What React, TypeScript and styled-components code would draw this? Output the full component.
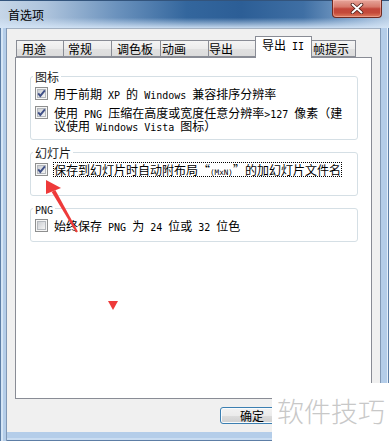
import React, { useId } from 'react';
import styled, { createGlobalStyle } from 'styled-components';

const CJK = `"Noto Sans CJK SC", "Noto Sans", sans-serif`;
const MONO = `"DejaVu Sans Mono", "Liberation Mono", monospace`;

const GlobalStyle = createGlobalStyle`
  html, body { margin: 0; padding: 0; background: #ffffff; overflow: hidden; }
  body { font-family: ${CJK}; }
  #root { width: 389px; height: 441px; }
`;

const Window = styled.div`
  position: relative;
  width: 389px;
  height: 441px;
  display: flex;
  flex-direction: column;
  overflow: hidden;
  background:
    linear-gradient(to right, #5d7ea6 0 1px, #d5e5f5 1px 3px, #b4cde9 3px 6px, #8198b5 6px 7px, transparent 7px),
    linear-gradient(to left, #5d7ea6 0 1px, #e6f0fa 1px 2px, #b4cde9 2px 8px, #8198b5 8px 9px, transparent 9px),
    linear-gradient(to top, #5d7ea6 0 1px, #c9dcf1 1px 3px, #b4cde9 3px 8px, transparent 8px),
    #b4cde9;
`;

const TitleBar = styled.div`
  height: 28px;
  flex: none;
  display: flex;
  align-items: flex-start;
  border-top: 1px solid #33547c;
  box-sizing: border-box;
  background:
    linear-gradient(to bottom, rgba(255,255,255,0) 0%, rgba(255,255,255,0) 62%, rgba(214,230,247,0.9) 100%),
    linear-gradient(to right, #c6d6e8 0%, #adc3dc 12%, #6b92bd 30%, #33669d 48%, #2c5e96 62%, #3f6fa4 78%, #86a8cd 92%, #b8cde4 100%);
`;

const Title = styled.div`
  padding: 7px 0 0 8px;
  font-size: 12px;
  line-height: 14px;
  color: #000;
`;

const CloseButton = styled.div`
  margin-left: auto;
  margin-right: 7px;
  margin-top: -1px;
  width: 50px;
  height: 18px;
  box-sizing: border-box;
  border: 1px solid #6e2a22;
  border-top: none;
  border-radius: 0 0 4px 4px;
  background:
    linear-gradient(to bottom, #e6a59b 0%, #d77a6c 40%, #c2463a 52%, #c44a3a 75%, #de7d5f 100%);
  box-shadow: inset 0 0 0 1px rgba(255, 200, 190, 0.45);
  display: flex;
  align-items: center;
  justify-content: center;
`;

const FrameBody = styled.div`
  flex: 1;
  display: flex;
  padding: 0 9px 9px 7px;
  min-height: 0;
`;

const Client = styled.div`
  flex: 1;
  display: flex;
  flex-direction: column;
  background: #f0f0f0;
  border-top: 1px solid #a3b1c2;
  padding: 7px 8px 0 8px;
`;

const TabStrip = styled.div`
  height: 21px;
  display: flex;
  align-items: flex-end;
  padding-left: 1px;
  flex: none;
`;

const Tab = styled.div<{ $w: number; $pl: number; $active?: boolean; $first?: boolean }>`
  position: relative;
  z-index: ${(p) => (p.$active ? 2 : 1)};
  box-sizing: border-box;
  width: ${(p) => p.$w}px;
  height: ${(p) => (p.$active ? 22 : 17)}px;
  margin-left: ${(p) => (p.$first ? 0 : -1)}px;
  margin-bottom: ${(p) => (p.$active ? -1 : 0)}px;
  padding-left: ${(p) => p.$pl}px;
  border: 1px solid #898c95;
  border-bottom: ${(p) => (p.$active ? 'none' : '1px solid #898c95')};
  background: ${(p) =>
    p.$active ? '#ffffff' : 'linear-gradient(to bottom, #f4f4f4 0%, #ececec 50%, #e1e1e1 51%, #dcdcdc 100%)'};
  font-size: 12px;
  line-height: 15px;
  color: #000;
  white-space: nowrap;
`;

const Panel = styled.div`
  box-sizing: border-box;
  height: 342px;
  flex: none;
  border: 1px solid #898c95;
  background: #ffffff;
  padding: 12px 13px 0 14px;
  display: flex;
  flex-direction: column;
  gap: 6px;
`;

const Group = styled.fieldset<{ $pb: number }>`
  margin: 0;
  min-width: 0;
  border: 1px solid #d5dfe5;
  border-radius: 3px;
  padding: 4px 4px ${(p) => p.$pb}px 4px;
  display: flex;
  flex-direction: column;
  gap: 6px;
`;

const Legend = styled.legend`
  padding: 0 2px;
  margin-left: -2px;
  font-size: 12px;
  line-height: 13px;
  color: #1a1a1a;
`;

const CheckRow = styled.div`
  display: flex;
  align-items: flex-start;
  gap: 6px;
`;

const Label = styled.span<{ $focused?: boolean }>`
  font-size: 12px;
  line-height: 13px;
  color: #000;
  white-space: nowrap;
  ${(p) =>
    p.$focused
      ? `border: 1px dotted #000; margin: -1px 0 -1px -1px;`
      : ''}
`;

const Line = styled.span`
  display: block;
  height: 13px;
`;

const Lat = styled.span`
  font-family: ${MONO};
  font-size: 10px;
  line-height: 8px;
  white-space: pre;
`;

const Tiny = styled.span`
  font-family: ${MONO};
  font-size: 7.6px;
  line-height: 0;
`;

const Quote = styled.span<{ $align: 'left' | 'right' }>`
  display: inline-block;
  width: 12px;
  text-align: ${(p) => p.$align};
  line-height: 13px;
`;

const ButtonRow = styled.div`
  display: flex;
  padding: 8px 0 0 205px;
`;

const Button = styled.button`
  box-sizing: border-box;
  width: 64px;
  height: 17px;
  padding: 0;
  border: 1px solid #3c7fb1;
  border-radius: 3px;
  background: linear-gradient(to bottom, #f2f2f2 0%, #ebebeb 50%, #dddddd 51%, #cfcfcf 100%);
  box-shadow: inset 0 0 0 1px #f8fbfd;
  font-family: ${CJK};
  font-size: 12px;
  line-height: 14px;
  color: #000;
`;

const Watermark = styled.div`
  position: absolute;
  right: 0;
  bottom: 0;
  width: 117px;
  height: 58px;
  box-sizing: border-box;
  background: #ffffff;
  padding: 14px 0 0 5px;
  font-size: 27px;
  line-height: 27px;
  font-weight: 300;
  color: #c8c8c8;
  white-space: nowrap;
`;

const Overlay = styled.svg`
  position: absolute;
  left: 0;
  top: 0;
  pointer-events: none;
`;

function CheckBox({ checked }: { checked: boolean }) {
  const id = useId().replace(/:/g, '');
  return (
    <svg width="13" height="13" viewBox="0 0 13 13" style={{ flex: 'none' }}>
      <defs>
        <linearGradient id={`g${id}`} x1="0" y1="0" x2="1" y2="1">
          <stop offset="0" stopColor="#c9ccd1" />
          <stop offset="1" stopColor="#f7f7f7" />
        </linearGradient>
      </defs>
      <rect x="0.5" y="0.5" width="12" height="12" fill="#f6f6f6" stroke="#8e8f8f" />
      <rect x="2.5" y="2.5" width="8" height="8" fill={`url(#g${id})`} stroke="#b4b8bd" />
      {checked && (
        <path d="M3.2 6.4 L5.3 8.9 L9.9 3.4" fill="none" stroke="#3f4f86" strokeWidth="1.9" />
      )}
    </svg>
  );
}

const tabs = [
  { label: <>用途</>, w: 48, pl: 5 },
  { label: <>常规</>, w: 49, pl: 4 },
  { label: <>调色板</>, w: 50, pl: 5 },
  { label: <>动画</>, w: 49, pl: 1 },
  { label: <>导出</>, w: 48, pl: 0 },
  { label: <>导出<Lat> II</Lat></>, w: 57, pl: 6, active: true },
  { label: <>帧提示</>, w: 45, pl: 1 },
];

export default function App() {
  return (
    <>
      <GlobalStyle />
      <Window>
        <TitleBar>
          <Title>首选项</Title>
          <CloseButton>
            <svg width="14" height="11" viewBox="0 0 14 11">
              <path d="M2.5 1.5 L11.5 9.5 M11.5 1.5 L2.5 9.5" stroke="#4b1b15" strokeWidth="3.6" strokeLinecap="round" />
              <path d="M2.5 1.5 L11.5 9.5 M11.5 1.5 L2.5 9.5" stroke="#ffffff" strokeWidth="2" strokeLinecap="round" />
            </svg>
          </CloseButton>
        </TitleBar>
        <FrameBody>
          <Client>
            <TabStrip>
              {tabs.map((t, i) => (
                <Tab key={i} $w={t.w} $pl={t.pl} $active={t.active} $first={i === 0}>
                  {t.label}
                </Tab>
              ))}
            </TabStrip>
            <Panel>
              <Group $pb={7}>
                <Legend>图标</Legend>
                <CheckRow>
                  <CheckBox checked />
                  <Label>
                    用于前期<Lat> XP </Lat>的<Lat> Windows </Lat>兼容排序分辨率
                  </Label>
                </CheckRow>
                <CheckRow>
                  <CheckBox checked />
                  <Label>
                    <Line>
                      使用<Lat> PNG </Lat>压缩在高度或宽度任意分辨率<Lat>&gt;127 </Lat>像素（建
                    </Line>
                    <Line>
                      议使用<Lat> Windows Vista </Lat>图标）
                    </Line>
                  </Label>
                </CheckRow>
              </Group>
              <Group $pb={19}>
                <Legend>幻灯片</Legend>
                <CheckRow>
                  <CheckBox checked />
                  <Label $focused>
                    保存到幻灯片时自动附布局<Quote $align="right">“</Quote>
                    <Tiny>(MxN)</Tiny>
                    <Quote $align="left">”</Quote>的加幻灯片文件名
                  </Label>
                </CheckRow>
              </Group>
              <Group $pb={9}>
                <Legend>
                  <Lat>PNG</Lat>
                </Legend>
                <CheckRow>
                  <CheckBox checked={false} />
                  <Label>
                    始终保存<Lat> PNG </Lat>为<Lat> 24 </Lat>位或<Lat> 32 </Lat>位色
                  </Label>
                </CheckRow>
              </Group>
            </Panel>
            <ButtonRow>
              <Button>确定</Button>
            </ButtonRow>
          </Client>
        </FrameBody>
        <Watermark>软件技巧</Watermark>
        <Overlay width="389" height="441" viewBox="0 0 389 441">
          <polygon points="46,180 61,188 46,194" fill="#ee3a3a" />
          <polygon points="55.3,190 51.7,192 76.1,232.5 77.9,231.5" fill="#ee3a3a" />
          <polygon points="108,301 118,301 113,310" fill="#ee3a3a" />
        </Overlay>
      </Window>
    </>
  );
}
